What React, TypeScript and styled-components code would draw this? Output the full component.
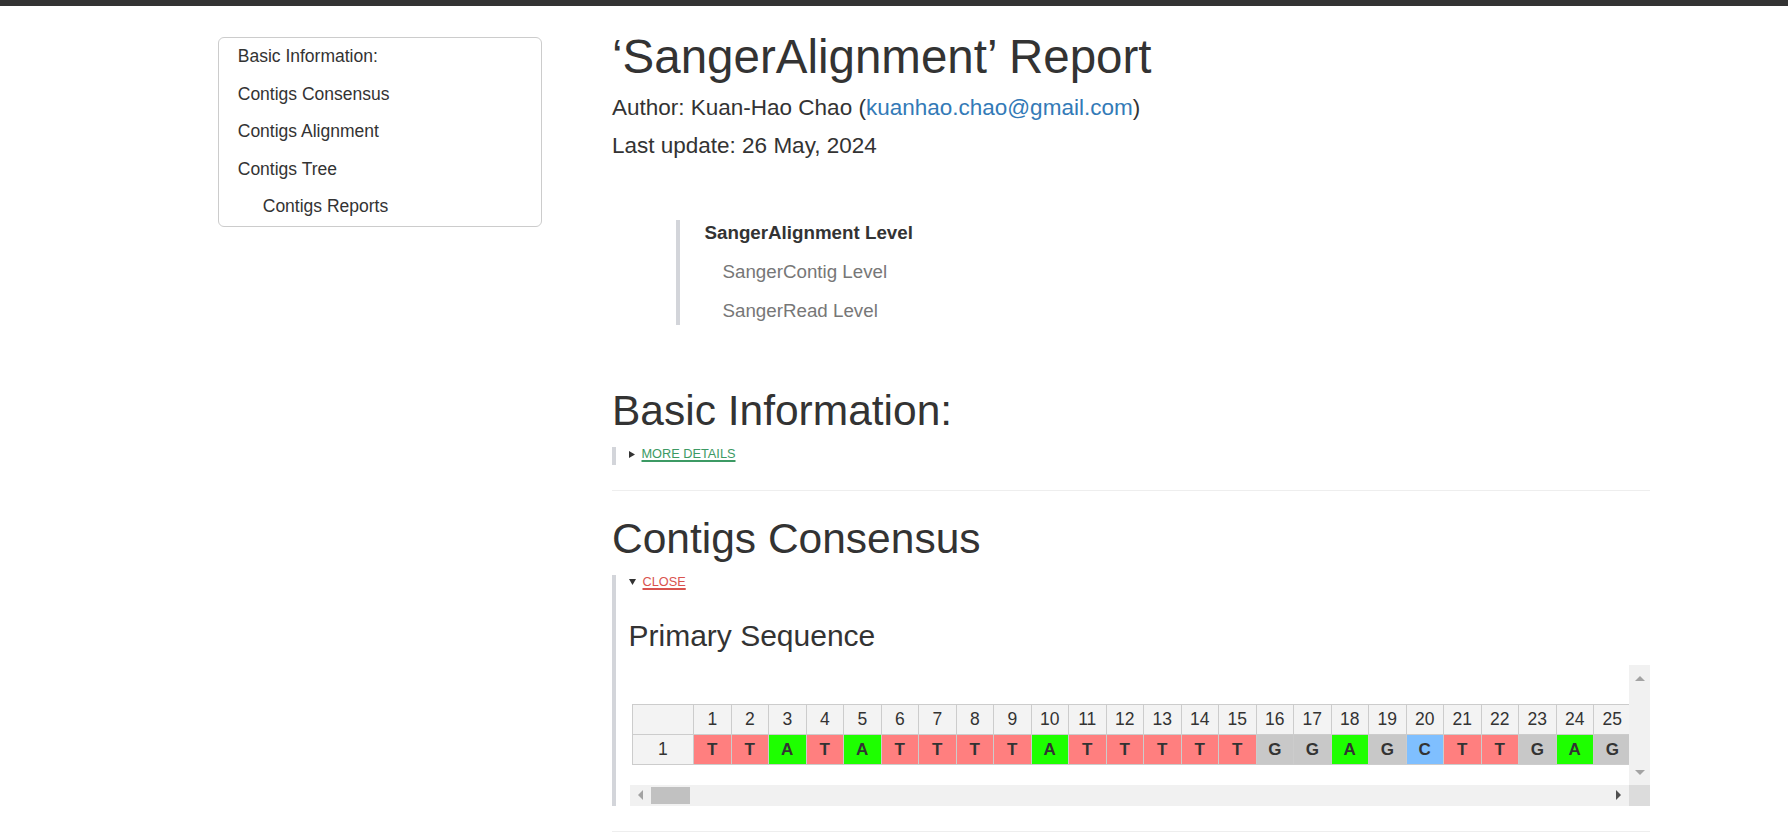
import React from 'react';
import styled, { createGlobalStyle } from 'styled-components';

const Global = createGlobalStyle`
  html, body { margin: 0; padding: 0; background: #fff; }
  body {
    font-family: "Liberation Sans", Arial, Helvetica, sans-serif;
    color: #333;
    font-size: 17.5px;
    line-height: 25px;
  }
  * { box-sizing: border-box; }
`;

const TopBar = styled.div`
  height: 6px;
  background: #333;
`;

const Layout = styled.div`
  display: flex;
  align-items: flex-start;
  padding-left: 218px;
  gap: 70px;
`;

const TocBox = styled.nav`
  width: 324px;
  margin-top: 31px;
  border: 1px solid #ccc;
  border-radius: 6px;
`;

const TocItem = styled.div<{ $sub?: boolean }>`
  padding: 6.25px 18.75px 6.25px ${(p) => (p.$sub ? 43.75 : 18.75)}px;
  line-height: 25px;
  font-size: 17.5px;
  color: #333;
`;

const Main = styled.main`
  width: 1038px;
  display: flex;
  flex-direction: column;
`;

const Title = styled.h1`
  margin: 25px 0 0;
  font-size: 47.5px;
  line-height: 52px;
  font-weight: 500;
  color: #333;
`;

const Meta = styled.h4<{ $mt: number }>`
  margin: ${(p) => p.$mt}px 0 0;
  font-size: 22.5px;
  line-height: 25px;
  font-weight: 500;
  color: #333;
`;

const Link = styled.a`
  color: #337ab7;
  text-decoration: none;
`;

const LevelNav = styled.div`
  margin: 62.5px 0 0 64px;
  border-left: 4.5px solid #d3d5da;
  padding: 0 0 2px 24.5px;
  display: flex;
  flex-direction: column;
  gap: 14px;
`;

const LevelItem = styled.div<{ $active?: boolean }>`
  font-size: 18.75px;
  line-height: 25px;
  font-weight: ${(p) => (p.$active ? 700 : 400)};
  color: ${(p) => (p.$active ? '#333' : '#777')};
  margin-left: ${(p) => (p.$active ? 0 : 18)}px;
`;

const SectionTitle = styled.h2<{ $mt: number }>`
  margin: ${(p) => p.$mt}px 0 0;
  font-size: 42.5px;
  line-height: 47px;
  font-weight: 500;
  color: #333;
`;

const Details = styled.div`
  margin-top: 13.5px;
  border-left: 4.5px solid #d3d5da;
  padding-left: 12.5px;
  display: flex;
  flex-direction: column;
`;

const Summary = styled.div<{ $color: string }>`
  display: flex;
  align-items: center;
  gap: 7px;
  height: 18px;
  padding-bottom: 4px;
  font-size: 12.75px;
  line-height: 14px;
  text-transform: uppercase;
  color: ${(p) => p.$color};
`;

const SummaryText = styled.span`
  text-decoration: underline;
  text-decoration-thickness: 2px;
  text-underline-offset: 2px;
`;

const Rule = styled.hr<{ $mt: number }>`
  margin: ${(p) => p.$mt}px 0 0;
  border: 0;
  border-top: 1px solid #eee;
  height: 0;
`;

const SubTitle = styled.h3`
  margin: 26px 0 0;
  font-size: 30px;
  line-height: 33px;
  font-weight: 500;
  color: #333;
`;

const Widget = styled.div`
  margin: 11px 0 0 1px;
  display: grid;
  grid-template-columns: 1fr 21px;
  grid-template-rows: 121.5px 21px;
`;

const Viewport = styled.div`
  overflow: hidden;
  padding: 40.5px 0 0 2px;
`;

const Grid = styled.table`
  border-collapse: separate;
  border-spacing: 0;
  table-layout: fixed;
  width: ${62.5 + 25 * 37.5}px;
`;

const HeadCell = styled.th<{ $corner?: boolean }>`
  width: ${(p) => (p.$corner ? 62.5 : 37.5)}px;
  height: 31.5px;
  padding: 0;
  background: #f3f3f3;
  border-top: 1px solid #ccc;
  border-right: 1px solid #ccc;
  border-bottom: 1px solid #ccc;
  border-left: ${(p) => (p.$corner ? '1px solid #ccc' : '0')};
  font-size: 17.5px;
  font-weight: 400;
  color: #333;
  text-align: center;
`;

const RowHead = styled.th`
  height: 30px;
  padding: 0;
  background: #f3f3f3;
  border-left: 1px solid #ccc;
  border-right: 1px solid #ccc;
  border-bottom: 1px solid #ccc;
  font-size: 17.5px;
  font-weight: 400;
  color: #333;
  text-align: center;
`;

const baseColors: Record<string, string> = {
  T: '#ff7f7f',
  A: '#1eff00',
  G: '#c8c8c8',
  C: '#7fbfff',
};

const BaseCell = styled.td<{ $base: string }>`
  height: 30px;
  padding: 0;
  background: ${(p) => baseColors[p.$base]};
  border-right: 1px solid #ccc;
  border-bottom: 1px solid #ccc;
  font-size: 17px;
  font-weight: 700;
  color: #333;
  text-align: center;
`;

const VScroll = styled.div`
  background: #f1f1f1;
  margin-top: 1.5px;
  display: flex;
  flex-direction: column;
  align-items: center;
  justify-content: space-between;
  padding: 11px 0 10px;
`;

const HScroll = styled.div`
  background: #f1f1f1;
  display: flex;
  align-items: center;
  padding: 0 8px;
`;

const Thumb = styled.div`
  width: 39px;
  height: 17px;
  background: #c1c1c1;
  margin-left: 8px;
`;

const Spacer = styled.div`
  flex: 1;
`;

const Corner = styled.div`
  background: #dcdcdc;
`;

const Arrow = ({ dir, color }: { dir: 'up' | 'down' | 'left' | 'right'; color: string }) => {
  const pts: Record<string, string> = {
    up: '0,5 5,0 10,5',
    down: '0,0 10,0 5,5',
    left: '5,0 5,10 0,5',
    right: '0,0 0,10 5,5',
  };
  const vertical = dir === 'up' || dir === 'down';
  return (
    <svg width={vertical ? 10 : 5} height={vertical ? 5 : 10} viewBox={vertical ? '0 0 10 5' : '0 0 5 10'}>
      <polygon points={pts[dir]} fill={color} />
    </svg>
  );
};

const Tri = ({ open }: { open?: boolean }) =>
  open ? (
    <svg width="7" height="6" viewBox="0 0 7 6">
      <polygon points="0,0 7,0 3.5,6" fill="#333" />
    </svg>
  ) : (
    <svg width="6" height="7" viewBox="0 0 6 7">
      <polygon points="0,0 6,3.5 0,7" fill="#333" />
    </svg>
  );

const seq = 'TTATATTTTATTTTTGGAGCTTGAG'.split('');

export default function App() {
  return (
    <>
      <Global />
      <TopBar />
      <Layout>
        <TocBox>
          <TocItem>Basic Information:</TocItem>
          <TocItem>Contigs Consensus</TocItem>
          <TocItem>Contigs Alignment</TocItem>
          <TocItem>Contigs Tree</TocItem>
          <TocItem $sub>Contigs Reports</TocItem>
        </TocBox>
        <Main>
          <Title>‘SangerAlignment’ Report</Title>
          <Meta $mt={11.5}>
            Author: Kuan-Hao Chao (<Link href="#">kuanhao.chao@gmail.com</Link>)
          </Meta>
          <Meta $mt={13}>Last update: 26 May, 2024</Meta>
          <LevelNav>
            <LevelItem $active>SangerAlignment Level</LevelItem>
            <LevelItem>SangerContig Level</LevelItem>
            <LevelItem>SangerRead Level</LevelItem>
          </LevelNav>
          <SectionTitle $mt={61.5}>Basic Information:</SectionTitle>
          <Details>
            <Summary $color="#3c9a64">
              <Tri />
              <SummaryText>More details</SummaryText>
            </Summary>
          </Details>
          <Rule $mt={25} />
          <SectionTitle $mt={23.5}>Contigs Consensus</SectionTitle>
          <Details>
            <Summary $color="#d9534f">
              <Tri open />
              <SummaryText>Close</SummaryText>
            </Summary>
            <SubTitle>Primary Sequence</SubTitle>
            <Widget>
              <Viewport>
                <Grid>
                  <thead>
                    <tr>
                      <HeadCell $corner />
                      {seq.map((_, i) => (
                        <HeadCell key={i}>{i + 1}</HeadCell>
                      ))}
                    </tr>
                  </thead>
                  <tbody>
                    <tr>
                      <RowHead>1</RowHead>
                      {seq.map((b, i) => (
                        <BaseCell key={i} $base={b}>
                          {b}
                        </BaseCell>
                      ))}
                    </tr>
                  </tbody>
                </Grid>
              </Viewport>
              <VScroll>
                <Arrow dir="up" color="#a3a3a3" />
                <Arrow dir="down" color="#a3a3a3" />
              </VScroll>
              <HScroll>
                <Arrow dir="left" color="#a3a3a3" />
                <Thumb />
                <Spacer />
                <Arrow dir="right" color="#505050" />
              </HScroll>
              <Corner />
            </Widget>
          </Details>
          <Rule $mt={25.5} />
        </Main>
      </Layout>
    </>
  );
}
